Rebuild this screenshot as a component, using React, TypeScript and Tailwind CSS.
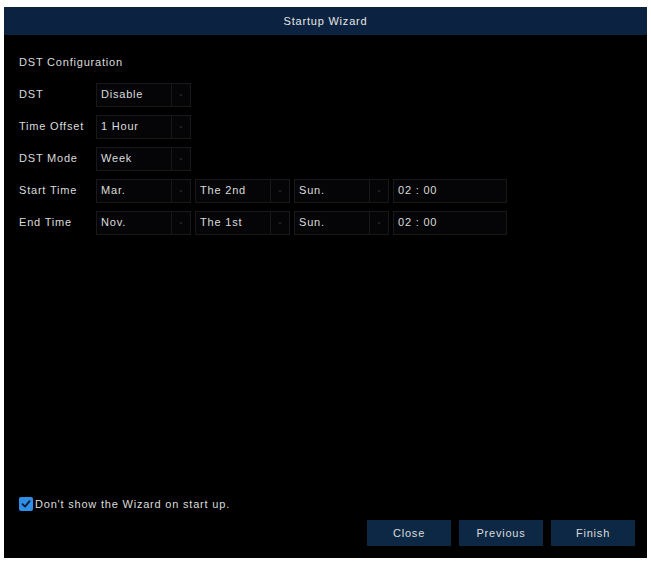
import React from 'react';

type SelectProps = { value: string; chevron?: boolean; wide?: boolean };

const Field: React.FC<SelectProps> = ({ value, chevron = true, wide = false }) => (
  <div
    className={`flex h-[24px] ${wide ? 'w-[114px]' : 'w-[95px]'} items-stretch border border-[#18181a] bg-[#050507]`}
  >
    <div className="flex flex-1 items-center pl-[4px] text-[11px] text-[#dcdcdc]">{value}</div>
    {chevron && (
      <div className="flex w-[19px] items-center justify-center border-l border-[#18181a] text-[7px] text-[#3a3a3e]">
        ⌄
      </div>
    )}
  </div>
);

const Row: React.FC<{ label: string; children: React.ReactNode }> = ({ label, children }) => (
  <div className="flex h-[32px] items-center">
    <div className="w-[77px] text-[11px] text-[#dcdcdc]">{label}</div>
    <div className="flex gap-[4px]">{children}</div>
  </div>
);

const App: React.FC = () => {
  return (
    <div className="h-[562px] w-[651px] bg-white pl-[4px] pr-[4px] pt-[7px] pb-[4px]" style={{ fontFamily: '"Liberation Sans", Arial, sans-serif' }}>
      <div className="flex h-[551px] w-[643px] flex-col bg-black tracking-[0.05em]">
        <header className="flex h-[28px] items-center justify-center bg-[#0b2340] text-[11px] text-[#e6e6e6]">
          Startup Wizard
        </header>
        <div className="flex flex-1 flex-col pl-[15px] pr-[12px]">
          <div className="mt-[19px] mb-[8px] text-[11px] text-[#dcdcdc]">DST Configuration</div>
          <div className="flex flex-col">
            <Row label="DST">
              <Field value="Disable" />
            </Row>
            <Row label="Time Offset">
              <Field value="1 Hour" />
            </Row>
            <Row label="DST Mode">
              <Field value="Week" />
            </Row>
            <Row label="Start Time">
              <Field value="Mar." />
              <Field value="The 2nd" />
              <Field value="Sun." />
              <Field value="02 : 00" chevron={false} wide />
            </Row>
            <Row label="End Time">
              <Field value="Nov." />
              <Field value="The 1st" />
              <Field value="Sun." />
              <Field value="02 : 00" chevron={false} wide />
            </Row>
          </div>
          <div className="flex-1" />
          <label className="flex items-center text-[11px] text-[#dcdcdc]">
            <span className="mr-[2px] flex h-[14px] w-[14px] items-center justify-center rounded-[2px] bg-[#2f8ee6]">
              <svg width="10" height="10" viewBox="0 0 10 10" fill="none">
                <path d="M1.5 5.2 L4 7.6 L8.6 2.2" stroke="#0a1a33" strokeWidth="1.8" strokeLinecap="round" strokeLinejoin="round" />
              </svg>
            </span>
            Don't show the Wizard on start up.
          </label>
          <div className="mt-[8px] mb-[12px] flex justify-end gap-[8px]">
            <button className="h-[26px] w-[84px] bg-[#0d2844] text-[11px] text-[#dcdcdc]">Close</button>
            <button className="h-[26px] w-[84px] bg-[#0d2844] text-[11px] text-[#dcdcdc]">Previous</button>
            <button className="h-[26px] w-[84px] bg-[#0d2844] text-[11px] text-[#dcdcdc]">Finish</button>
          </div>
        </div>
      </div>
    </div>
  );
};

export default App;
